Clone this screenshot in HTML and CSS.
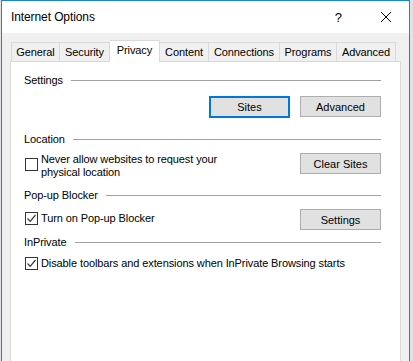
FILE: index.html
```html
<!DOCTYPE html>
<html lang="en">
  <head>
    <meta charset="UTF-8" />
    <meta name="viewport" content="width=device-width, initial-scale=1.0" />
    <title>Internet Options</title>
    <link rel="stylesheet" href="styles.css">
  </head>

  <body>
    <div class="window">
      <div class="titlebar">
        <span class="title">Internet Options</span>
        <span class="help">?</span>
        <svg class="close" width="12" height="12" viewBox="0 0 12 12">
          <path d="M1 1 L11 11 M11 1 L1 11" stroke="#000" stroke-width="1" fill="none" />
        </svg>
      </div>

      <div class="body">
        <div class="tabs">
          <div class="tab t-general">General</div>
          <div class="tab t-security">Security</div>
          <div class="tab t-privacy active">Privacy</div>
          <div class="tab t-content">Content</div>
          <div class="tab t-connections">Connections</div>
          <div class="tab t-programs">Programs</div>
          <div class="tab t-advanced">Advanced</div>
        </div>

        <div class="panel">
          <!-- settings -->
          <div class="group g-settings">
            <span>Settings</span>
            <div class="rule"></div>
          </div>
          <div class="row r-buttons">
            <button class="btn focused">Sites</button>
            <button class="btn">Advanced</button>
          </div>

          <!-- location -->
          <div class="group g-location">
            <span>Location</span>
            <div class="rule"></div>
          </div>
          <div class="row r-location">
            <label class="check">
              <span class="box"></span>
              <span class="text">Never allow websites to request your<br>physical location</span>
            </label>
            <button class="btn">Clear Sites</button>
          </div>

          <!-- popup -->
          <div class="group g-popup">
            <span>Pop-up Blocker</span>
            <div class="rule"></div>
          </div>
          <div class="row r-popup">
            <label class="check">
              <span class="box checked">
                <svg width="11" height="11" viewBox="0 0 11 11"><path d="M1.5 5.5 L4.2 8.3 L9.5 2" stroke="#333" stroke-width="1.2" fill="none" /></svg>
              </span>
              <span class="text">Turn on Pop-up Blocker</span>
            </label>
            <button class="btn">Settings</button>
          </div>

          <!-- inprivate -->
          <div class="group g-inprivate">
            <span>InPrivate</span>
            <div class="rule"></div>
          </div>
          <div class="row r-inprivate">
            <label class="check">
              <span class="box checked">
                <svg width="11" height="11" viewBox="0 0 11 11"><path d="M1.5 5.5 L4.2 8.3 L9.5 2" stroke="#333" stroke-width="1.2" fill="none" /></svg>
              </span>
              <span class="text">Disable toolbars and extensions when InPrivate Browsing starts</span>
            </label>
          </div>
        </div>
      </div>
    </div>
  </body>
</html>
```

FILE: styles.css
```css
html, body {
  height: 361px;
}
body {
  margin: 0;
  background-color: #dfe3e6;
  font-family: "Liberation Sans", Arial, sans-serif;
  font-size: 11px;
  letter-spacing: -0.1px;
  color: #000;
  overflow: hidden;
}
.window {
  margin-left: 1px;
  width: 407px;
  height: 360px;
  border: 1px solid #1883d7;
  border-bottom: none;
  background-color: #f0f0f0;
}
.titlebar {
  display: flex;
  align-items: center;
  height: 32px;
  background-color: #fff;
}
.title {
  margin-left: 9px;
  flex: 1;
  font-size: 12px;
}
.help {
  font-size: 13px;
  margin-right: 38px;
}
.close {
  margin-right: 17px;
}
.body {
  padding: 7px 8px 0 8px;
}
.tabs {
  display: flex;
  align-items: flex-end;
  height: 21px;
  padding-left: 1px;
}
.tab {
  box-sizing: border-box;
  height: 19px;
  line-height: 18px;
  text-align: center;
  border: 1px solid #d9d9d9;
  border-bottom: none;
  border-left: none;
  background-color: #f0f0f0;
}
.tab.t-general { width: 49px; border-left: 1px solid #d9d9d9; }
.tab.t-security { width: 50px; }
.tab.t-privacy { width: 50px; }
.tab.t-content { width: 49px; }
.tab.t-connections { width: 71px; }
.tab.t-programs { width: 57px; }
.tab.t-advanced { width: 59px; }
.tab.active {
  height: 22px;
  line-height: 18px;
  margin-bottom: -1px;
  background-color: #fff;
  position: relative;
  z-index: 1;
}
.panel {
  box-sizing: border-box;
  width: 391px;
  height: 300px;
  border: 1px solid #d9d9d9;
  border-bottom: none;
  background-color: #fff;
  padding: 11px 19px 0 13px;
}
.group {
  display: flex;
  align-items: center;
  line-height: 15px;
}
.rule {
  flex: 1;
  height: 1px;
  margin-left: 8px;
  background-color: #a0a0a0;
}
.row {
  display: flex;
  justify-content: flex-end;
}
.btn {
  box-sizing: border-box;
  width: 81px;
  height: 21px;
  padding: 0;
  font-family: inherit;
  font-size: 11px;
  color: #000;
  background-color: #e1e1e1;
  border: 1px solid #adadad;
}
.btn.focused {
  height: 22px;
  border: 2px solid #0078d7;
  margin-right: 10px;
}
.r-buttons { margin-top: 8px; }
.g-location { margin-top: 14px; }
.r-location { margin-top: 6px; justify-content: space-between; }
.g-popup { margin-top: 9px; }
.r-popup { margin-top: 6px; justify-content: space-between; }
.g-inprivate { margin-top: 5px; }
.r-inprivate { margin-top: 7px; }
.r-inprivate .check { flex: 1; }
.check {
  display: flex;
  align-items: flex-start;
  line-height: 13px;
}
.r-popup .check { margin-top: 3px; }
.box {
  box-sizing: border-box;
  width: 13px;
  height: 13px;
  margin-top: 5px;
  margin-right: 3px;
  margin-left: 1px;
  border: 1px solid #333;
  background-color: #fff;
  display: flex;
  align-items: center;
  justify-content: center;
}
.box.checked { margin-top: 0; }
```
